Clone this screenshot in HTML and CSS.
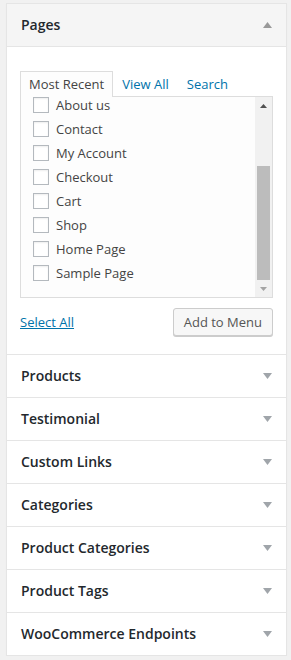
FILE: index.html
```html
<!DOCTYPE html>
<html lang="en">
<head>
  <meta charset="UTF-8" />
  <meta name="viewport" content="width=device-width, initial-scale=1.0" />
  <title>Add menu items</title>
  <link rel="stylesheet" href="styles.css">
</head>
<body>
  <div class="accordion">

    <div class="section open">
      <h3 class="section-title">
        <span>Pages</span>
        <svg class="arrow" width="9" height="6" viewBox="0 0 9 6"><polygon points="0,6 9,6 4.5,0" /></svg>
      </h3>
      <div class="section-content">
        <ul class="tabs">
          <li class="tab active">Most Recent</li>
          <li class="tab"><a href="#">View All</a></li>
          <li class="tab"><a href="#">Search</a></li>
        </ul>
        <div class="tab-panel">
          <ul class="checklist">
            <li><span class="check"></span>About us</li>
            <li><span class="check"></span>Contact</li>
            <li><span class="check"></span>My Account</li>
            <li><span class="check"></span>Checkout</li>
            <li><span class="check"></span>Cart</li>
            <li><span class="check"></span>Shop</li>
            <li><span class="check"></span>Home Page</li>
            <li><span class="check"></span>Sample Page</li>
          </ul>
          <div class="scrollbar">
            <div class="scroll-btn">
              <svg width="7" height="4" viewBox="0 0 7 4"><polygon points="0,4 7,4 3.5,0" fill="#505050" /></svg>
            </div>
            <div class="scroll-track"><div class="scroll-thumb"></div></div>
            <div class="scroll-btn">
              <svg width="7" height="4" viewBox="0 0 7 4"><polygon points="0,0 7,0 3.5,4" fill="#a3a3a3" /></svg>
            </div>
          </div>
        </div>
        <div class="actions">
          <a href="#" class="select-all">Select All</a>
          <button class="button">Add to Menu</button>
        </div>
      </div>
    </div>

    <div class="section">
      <h3 class="section-title"><span>Products</span><svg class="arrow" width="9" height="6" viewBox="0 0 9 6"><polygon points="0,0 9,0 4.5,6" /></svg></h3>
    </div>
    <div class="section">
      <h3 class="section-title"><span>Testimonial</span><svg class="arrow" width="9" height="6" viewBox="0 0 9 6"><polygon points="0,0 9,0 4.5,6" /></svg></h3>
    </div>
    <div class="section">
      <h3 class="section-title"><span>Custom Links</span><svg class="arrow" width="9" height="6" viewBox="0 0 9 6"><polygon points="0,0 9,0 4.5,6" /></svg></h3>
    </div>
    <div class="section">
      <h3 class="section-title"><span>Categories</span><svg class="arrow" width="9" height="6" viewBox="0 0 9 6"><polygon points="0,0 9,0 4.5,6" /></svg></h3>
    </div>
    <div class="section">
      <h3 class="section-title"><span>Product Categories</span><svg class="arrow" width="9" height="6" viewBox="0 0 9 6"><polygon points="0,0 9,0 4.5,6" /></svg></h3>
    </div>
    <div class="section">
      <h3 class="section-title"><span>Product Tags</span><svg class="arrow" width="9" height="6" viewBox="0 0 9 6"><polygon points="0,0 9,0 4.5,6" /></svg></h3>
    </div>
    <div class="section last">
      <h3 class="section-title"><span>WooCommerce Endpoints</span><svg class="arrow" width="9" height="6" viewBox="0 0 9 6"><polygon points="0,0 9,0 4.5,6" /></svg></h3>
    </div>

  </div>
</body>
</html>
```

FILE: styles.css
```css
body {
  margin: 0;
  padding: 3px 4px 0 6px;
  background: #f1f1f1;
  font-family: "Open Sans", "Liberation Sans", sans-serif;
  font-size: 13px;
  color: #444;
}
.accordion {
  width: 279px;
  background: #fff;
  border: 1px solid #e5e5e5;
  border-bottom: none;
  box-shadow: 0 1px 1px rgba(0, 0, 0, 0.04);
}
.section {
  border-bottom: 1px solid #e5e5e5;
}
.section-title {
  margin: 0;
  padding: 10px 14px 11px 14px;
  display: flex;
  justify-content: space-between;
  align-items: center;
  font-size: 14px;
  line-height: 21px;
  font-weight: 600;
  color: #23282d;
}
.open .section-title {
  background: #f5f5f5;
  border-bottom: 1px solid #e5e5e5;
}
.arrow {
  fill: #a0a5aa;
}
.open .arrow {
  fill: #999;
}
.section-content {
  padding: 24px 13px 18px 13px;
}
.tabs {
  list-style: none;
  margin: 0;
  padding: 0;
  display: flex;
}
.tab {
  padding: 3px 8px 2px 8px;
  line-height: 19px;
  border: 1px solid transparent;
  border-bottom: none;
}
.tab.active {
  border-color: #ddd;
  background: #fdfdfd;
  color: #444;
  position: relative;
  margin-bottom: -1px;
  padding-bottom: 3px;
}
.tab a {
  color: #0073aa;
  text-decoration: none;
}
.tab-panel {
  height: 200px;
  border: 1px solid #ddd;
  background: #fdfdfd;
  display: flex;
  overflow: hidden;
}
.checklist {
  list-style: none;
  margin: 0;
  padding: 0 0 0 12px;
  flex: 1;
}
.checklist li {
  display: flex;
  align-items: center;
  height: 16px;
  margin-bottom: 8px;
  line-height: 16px;
  color: #444;
}
.check {
  width: 14px;
  height: 14px;
  border: 1px solid #b4b9be;
  background: #fff;
  box-shadow: inset 0 1px 2px rgba(0, 0, 0, 0.07);
  margin-right: 7px;
  flex-shrink: 0;
}
.scrollbar {
  width: 17px;
  background: #f1f1f1;
  display: flex;
  flex-direction: column;
}
.scroll-btn {
  height: 17px;
  display: flex;
  align-items: center;
  justify-content: center;
}
.scroll-track {
  flex: 1;
  display: flex;
  flex-direction: column;
  justify-content: flex-end;
}
.scroll-thumb {
  height: 114px;
  margin: 0 2px;
  background: #bcbcbc;
}
.actions {
  margin-top: 10px;
  display: flex;
  justify-content: space-between;
  align-items: center;
}
.select-all {
  color: #0073aa;
  text-decoration: underline;
}
.button {
  height: 28px;
  padding: 0 10px;
  border: 1px solid #ccc;
  border-radius: 3px;
  background: #f7f7f7;
  box-shadow: 0 1px 0 #ccc;
  font-family: inherit;
  font-size: 13px;
  line-height: 26px;
  color: #555;
  cursor: pointer;
}
```
